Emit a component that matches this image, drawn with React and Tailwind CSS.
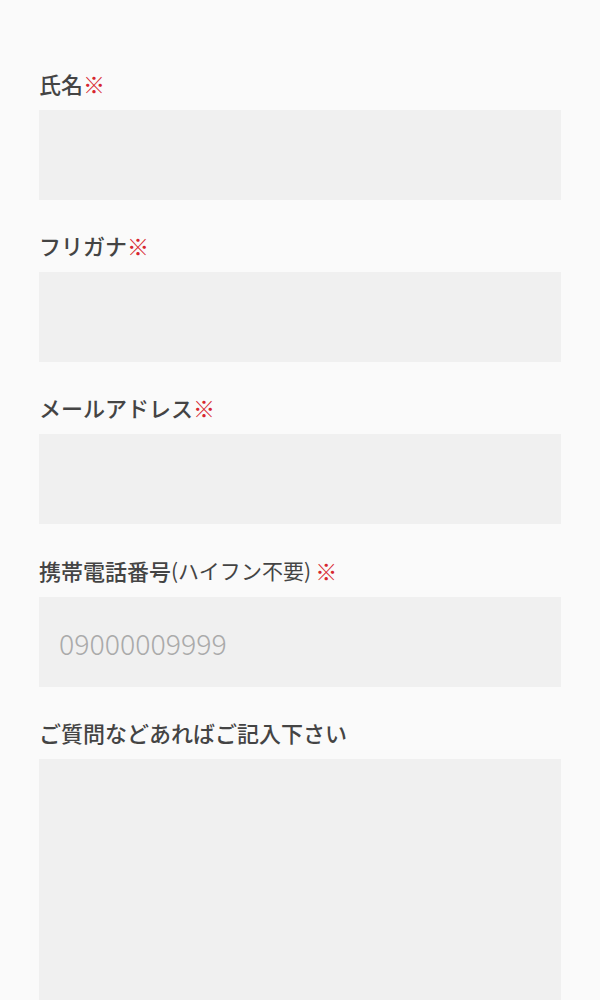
export default function App() {
  const font = { fontFamily: '"Noto Sans CJK JP", "Noto Sans", sans-serif' };
  const Req = () => <span className="text-[#d7262e] font-bold leading-[28px]">※</span>;
  const fields = [
    { label: <>氏名<Req /></>, mb: "mb-[31px]" },
    { label: <>フリガナ<Req /></>, mb: "mb-[31px]" },
    { label: <>メールアドレス<Req /></>, mb: "mb-[32px]" },
    {
      label: (
        <>
          携帯電話番号<span className="text-[21px] leading-[28px] font-normal">(ハイフン不要)</span><span className="ml-[4px] leading-[28px]"><Req /></span>
        </>
      ),
      placeholder: "09000009999",
      mb: "mb-[31px]",
    },
  ];
  return (
    <div className="min-h-screen bg-[#fafafa] px-[39px] pt-[69px]" style={font}>
      {fields.map((f, i) => (
        <div key={i} className={`flex flex-col ${f.mb}`}>
          <label className="flex items-center h-[28px] overflow-visible whitespace-nowrap text-[22px] leading-[28px] font-medium text-[#444444] mb-[13px]">
            {f.label}
          </label>
          <input
            type="text"
            placeholder={f.placeholder || ""}
            className="block w-full h-[90px] bg-[#f0f0f0] px-[20px] text-[28.5px] font-light text-[#444] placeholder:text-[#aaaaaa] outline-none border-0"
            style={font}
          />
        </div>
      ))}
      <div className="flex flex-col">
        <label className="flex items-center h-[28px] text-[22px] leading-[28px] font-medium text-[#444444] mb-[13px]">
          ご質問などあればご記入下さい
        </label>
        <textarea className="block w-full h-[300px] bg-[#f0f0f0] outline-none border-0 resize-none" />
      </div>
    </div>
  );
}
